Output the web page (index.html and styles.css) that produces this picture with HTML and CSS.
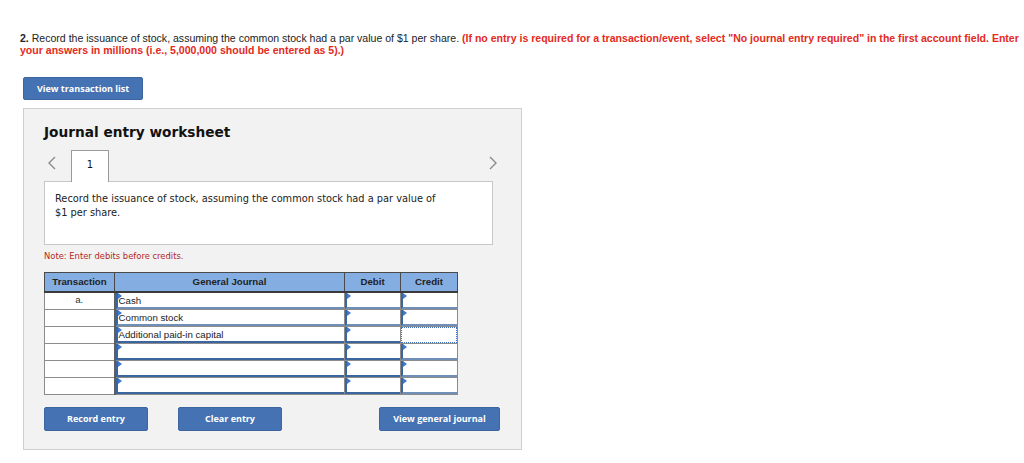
FILE: index.html
```html
<!DOCTYPE html>
<html>
<head>
<meta charset="utf-8">
<link rel="stylesheet" href="styles.css">
</head>
<body>
<div class="page">
  <p class="question"><b>2.</b> Record the issuance of stock, assuming the common stock had a par value of $1 per share. <span class="req">(If no entry is required for a transaction/event, select "No journal entry required" in the first account field. Enter<br>your answers in millions (i.e., 5,000,000 should be entered as 5).)</span></p>
  <button class="btn btn-list">View transaction list</button>
  <section class="panel">
    <h2 class="title">Journal entry worksheet</h2>
    <div class="nav">
      <span class="chev chev-left">
        <svg width="8" height="14" viewBox="0 0 8 14"><path d="M7 1 L1 7 L7 13" fill="none" stroke="#8a8a8a" stroke-width="1.4"/></svg>
      </span>
      <span class="tab">1</span>
      <span class="spacer"></span>
      <span class="chev chev-right">
        <svg width="8" height="14" viewBox="0 0 8 14"><path d="M1 1 L7 7 L1 13" fill="none" stroke="#8a8a8a" stroke-width="1.4"/></svg>
      </span>
    </div>
    <div class="desc">Record the issuance of stock, assuming the common stock had a par value of<br>$1 per share.</div>
    <p class="note">Note: Enter debits before credits.</p>
    <table class="journal">
      <colgroup><col class="c1"><col class="c2"><col class="c3"><col class="c4"></colgroup>
      <thead>
        <tr><th>Transaction</th><th>General Journal</th><th>Debit</th><th>Credit</th></tr>
      </thead>
      <tbody>
        <tr><td class="tr">a.</td><td><div class="inp">Cash</div></td><td><div class="inp"></div></td><td><div class="inp"></div></td></tr>
        <tr><td class="tr"></td><td><div class="inp">Common stock</div></td><td><div class="inp"></div></td><td><div class="inp"></div></td></tr>
        <tr><td class="tr"></td><td><div class="inp dark">Additional paid-in capital</div></td><td><div class="inp dark"></div></td><td><div class="inp focus"></div></td></tr>
        <tr><td class="tr"></td><td><div class="inp dark"></div></td><td><div class="inp dark"></div></td><td><div class="inp"></div></td></tr>
        <tr><td class="tr"></td><td><div class="inp dark"></div></td><td><div class="inp dark"></div></td><td><div class="inp"></div></td></tr>
        <tr><td class="tr"></td><td><div class="inp dark"></div></td><td><div class="inp dark"></div></td><td><div class="inp"></div></td></tr>
      </tbody>
    </table>
    <div class="actions">
      <button class="btn btn-act">Record entry</button>
      <button class="btn btn-act btn-clear">Clear entry</button>
      <span class="spacer"></span>
      <button class="btn btn-act btn-view">View general journal</button>
    </div>
  </section>
</div>
</body>
</html>
```

FILE: styles.css
```css
* { box-sizing: border-box; }
html, body { margin: 0; padding: 0; background: #fff; }
body { font-family: "Liberation Sans", Arial, sans-serif; color: #222; }

.page { padding: 32px 0 0 20px; }

.question {
  margin: 0;
  font-size: 10.55px;
  line-height: 12px;
  color: #222;
  white-space: nowrap;
}
.question .req { color: #e42a22; font-weight: bold; }

.btn {
  display: inline-flex;
  align-items: center;
  justify-content: center;
  background: #4572b2;
  color: #fff;
  border: 1px solid #3d66a1;
  border-radius: 2px;
  font-family: "Open Sans", "Liberation Sans", sans-serif;
  font-weight: 700;
  font-size: 9px;
  padding: 0;
  cursor: pointer;
}
.btn-list {
  margin: 21px 0 0 3px;
  width: 120px;
  height: 23px;
}

.panel {
  margin: 8px 0 0 3px;
  width: 499px;
  height: 342px;
  background: #f2f2f2;
  border: 1px solid #cfcfcf;
  padding: 15px 0 0 20px;
}

.title {
  margin: 0;
  font-family: "DejaVu Sans", Verdana, sans-serif;
  font-weight: bold;
  font-size: 13.7px;
  line-height: 16px;
  color: #111;
}

.nav {
  display: flex;
  align-items: flex-end;
  width: 456px;
  height: 27px;
  margin-top: 14px;
}
.chev { display: flex; align-items: center; height: 30px; margin-bottom: 3px; }
.chev-left { margin-left: 4px; width: 23px; }
.chev-right { margin-right: 3px; }
.spacer { flex: 1; }
.tab {
  width: 38px;
  height: 32px;
  margin-bottom: -1px;
  background: #fff;
  border: 1px solid #9a9a9a;
  border-bottom: none;
  font-family: "DejaVu Sans", Verdana, sans-serif;
  font-size: 10px;
  color: #111;
  text-align: center;
  padding-top: 8px;
  position: relative;
  z-index: 1;
}

.desc {
  width: 449px;
  height: 64px;
  background: #fff;
  border: 1px solid #c8c8c8;
  padding: 10px 10px;
  font-family: "DejaVu Sans", Verdana, sans-serif;
  font-size: 9.8px;
  line-height: 14px;
  color: #222;
}

.note {
  margin: 5px 0 0 0;
  font-family: "DejaVu Sans", Verdana, sans-serif;
  font-size: 8.4px;
  line-height: 12px;
  color: #b3261e;
}

.journal {
  margin-top: 10px;
  border-collapse: collapse;
  table-layout: fixed;
  width: 413px;
  font-family: "Liberation Sans", Arial, sans-serif;
  font-size: 9.7px;
}
.journal col.c1 { width: 70px; }
.journal col.c2 { width: 230px; }
.journal col.c3 { width: 56px; }
.journal col.c4 { width: 57px; }

.journal th {
  height: 19px;
  background: #84aee2;
  border: 1px solid #4a4a4a;
  border-bottom: 2px solid #3a3a3a;
  font-weight: bold;
  color: #222;
  padding: 0;
  text-align: center;
}
.journal td {
  height: 17px;
  padding: 0;
  border: 1px solid #8c8c8c;
  background: #fff;
  vertical-align: top;
}
.journal td.tr {
  text-align: center;
  vertical-align: middle;
  color: #333;
  border-right: 2px solid #5e5e5e;
  background: #fff;
}
.journal tbody tr:first-child td.tr { vertical-align: top; line-height: 14px; }

.inp {
  position: relative;
  height: 16px;
  background: #fff;
  border-left: 2px solid #3b659f;
  border-bottom: 2px solid #6f8fb8;
  padding: 2px 0 0 1px;
  line-height: 12px;
  color: #222;
}
.inp.dark { border-bottom-color: #3b659f; }
.inp::before {
  content: "";
  position: absolute;
  left: 0;
  top: 0;
  border-top: 3px solid transparent;
  border-bottom: 3px solid transparent;
  border-left: 4px solid #3f78cf;
}
.inp.focus {
  border: 1px dotted #3a6ec2;
  border-width: 1.5px;
}
.inp.focus::before { display: none; }

.actions {
  display: flex;
  width: 456px;
  margin-top: 12px;
}
.btn-act { width: 104px; height: 24px; }
.btn-clear { margin-left: 30px; }
.btn-view { width: 121px; }
```
